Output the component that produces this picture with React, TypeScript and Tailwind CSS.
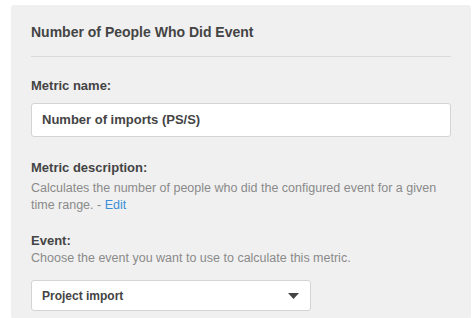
export default function App() {
  return (
    <div className="min-h-screen bg-white pt-[5px] pl-[11px] font-['Liberation_Sans',Arial,sans-serif]">
      <div className="w-[460px] rounded-[3px] bg-[#f0f0f0] px-5 pt-[17px] pb-2">
        <h2 className="border-b border-[#d9d9d9] pb-[14px] text-[14px] font-bold leading-[20px] text-[#444]">
          Number of People Who Did Event
        </h2>

        <label className="mt-[20px] block text-[13px] font-bold leading-[18px] text-[#444]">
          Metric name:
        </label>
        <div className="mt-[8px] flex h-[34px] items-center rounded-[3px] border border-[#d4d4d4] bg-white px-[10px] text-[13px] font-bold text-[#444]">
          Number of imports (PS/S)
        </div>

        <label className="mt-[22px] block text-[13px] font-bold leading-[18px] text-[#444]">
          Metric description:
        </label>
        <p className="mt-[3px] text-[12.5px] leading-[17px] text-[#8a8a8a]">
          Calculates the number of people who did the configured event for a given time range. -{' '}
          <a className="text-[#3b8fd8]">Edit</a>
        </p>

        <label className="mt-[18px] block text-[13px] font-bold leading-[18px] text-[#444]">
          Event:
        </label>
        <p className="text-[12.5px] leading-[17px] text-[#8a8a8a]">
          Choose the event you want to use to calculate this metric.
        </p>
        <div className="mt-[13px] flex h-[31px] w-[280px] items-center justify-between rounded-[3px] border border-[#d4d4d4] bg-white pr-[11px] pl-[10px] text-[12px] font-bold text-[#444]">
          <span>Project import</span>
          <svg width="11" height="6" viewBox="0 0 11 6" className="fill-[#444]">
            <path d="M0 0h11L5.5 6z" />
          </svg>
        </div>
      </div>
    </div>
  );
}
